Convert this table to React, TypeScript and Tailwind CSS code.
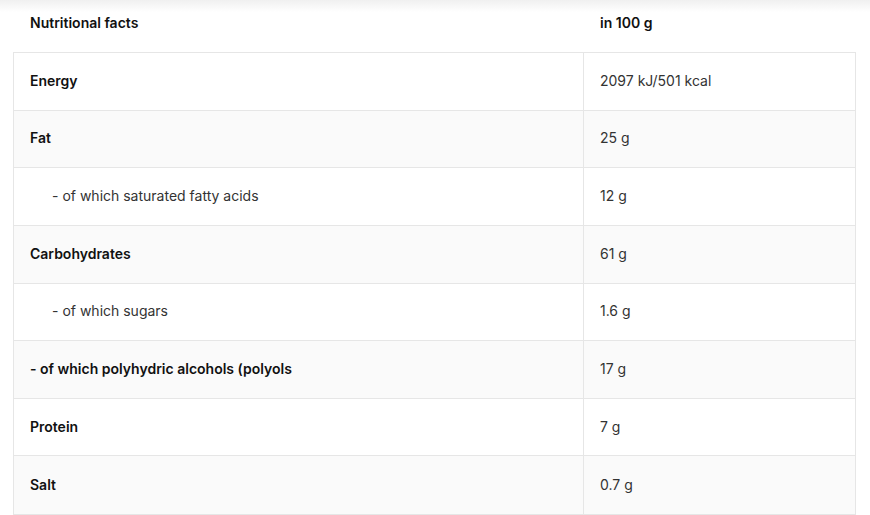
const rows: { label: string; value: string; bold?: boolean; indent?: boolean }[] = [
  { label: "Energy", value: "2097 kJ/501 kcal", bold: true },
  { label: "Fat", value: "25 g", bold: true },
  { label: "- of which saturated fatty acids", value: "12 g", indent: true },
  { label: "Carbohydrates", value: "61 g", bold: true },
  { label: "- of which sugars", value: "1.6 g", indent: true },
  { label: "- of which polyhydric alcohols (polyols", value: "17 g", bold: true },
  { label: "Protein", value: "7 g", bold: true },
  { label: "Salt", value: "0.7 g", bold: true },
];

export default function App() {
  return (
    <div className="relative min-h-[515px] bg-white font-['Inter','Open_Sans',sans-serif] text-[14px] text-[#1a1a1a]">
      <div className="absolute inset-x-0 top-0 h-[12px] bg-gradient-to-b from-[#f0f0f0] to-white" />
      <div className="relative pl-[13px] pr-[14px]">
        <div className="flex h-[44px] items-center font-semibold text-[#111]">
          <div className="w-[571px] pl-[17px]">Nutritional facts</div>
          <div className="pl-[16px]">in 100 g</div>
        </div>
        <div className="mt-[8px] border border-[#e6e6e6]">
          {rows.map((r, i) => (
            <div
              key={r.label}
              className={`flex h-[57.625px] items-center ${i < rows.length - 1 ? "border-b border-[#e6e6e6]" : ""} ${i % 2 === 1 ? "bg-[#fafafa]" : "bg-white"}`}
            >
              <div
                className={`flex h-full w-[570px] items-center border-r border-[#e6e6e6] pb-[2px] ${r.indent ? "pl-[38px] font-normal text-[#333]" : "pl-[16px]"} ${r.bold ? "font-semibold text-[#111]" : ""}`}
              >
                {r.label}
              </div>
              <div className="pb-[2px] pl-[16px] text-[#333]">{r.value}</div>
            </div>
          ))}
        </div>
      </div>
    </div>
  );
}
